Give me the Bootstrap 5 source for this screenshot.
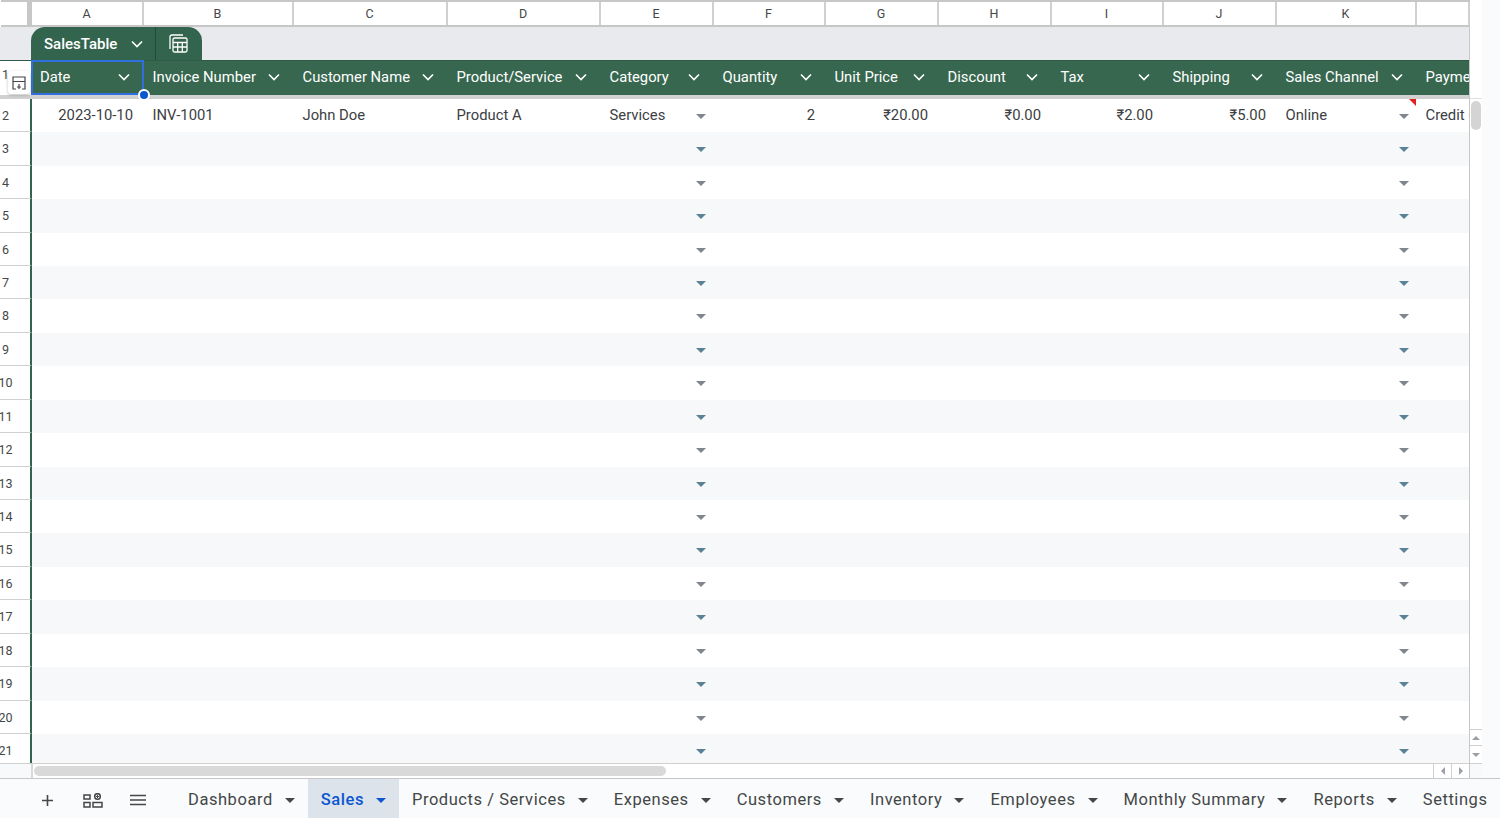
<!DOCTYPE html>
<html lang="en">
<head>
    <meta charset="UTF-8">
    <title>Sales</title>
    <link href="https://cdn.jsdelivr.net/npm/bootstrap@5.3.3/dist/css/bootstrap.min.css" rel="stylesheet">
    <style>
        body {
            background-color: #f9fbfd;
            font-family: Roboto, "Liberation Sans", sans-serif;
            color: #3c4043;
            height: 818px;
            overflow: hidden;
        }
        .sheet-wrap { height: 779px; border-bottom: 1px solid #c7c7c7; }
        .sheet-main { width: 1470px; border-right: 1px solid #c7c7c7; background: #fff; position: relative; }
        .grid-row {
            display: grid;
            grid-template-columns: 31px 112px 150px 154px 153px 113px 112px 113px 113px 112px 113px 140px 53px;
        }
        .col-heads { height: 27px; border-top: 2px solid #c7c7c7; border-bottom: 2px solid #c7c7c7; margin-left: 1px; }
        .col-heads > div {
            font-size: 12.5px;
            line-height: 23px;
            text-align: center;
            padding-right: 1px;
            border-right: 2px solid #d0d0d0;
            color: #444746;
        }
        .col-heads > div:first-child { border-right: 5px solid #c7c7c7; }
        .tab-strip { height: 33px; background: #e8eaed; padding-left: 31px; }
        .table-tab {
            width: 171px;
            height: 33px;
            background: #33644e;
            color: #fff;
            border-radius: 14px 14px 0 0;
            font-size: 15px;
            font-weight: 500;
        }
        .table-name { width: 125px; padding: 1px 0 0 13px; border-right: 1px solid #244a39; }
        .table-name span { width: 87px; }
        .table-icon { width: 45px; }
        .head-row { height: 35px; background: #38674f; color: #fff; border-top: 1px solid #2f5a45; font-size: 14.8px; }
        .head-row > div { padding: 0 13px 2px 9.500px; white-space: nowrap; overflow: hidden; }
        .head-row > div.corner { background: #fff; padding: 0 0 6px 2px; font-size: 12.5px; color: #444746; }
        .head-row > div.date-head { padding-left: 9px; }
        .freeze-bar { height: 4px; background: #d1d1d1; }
        .data-row { height: 33.45px; font-size: 14.8px; line-height: 33px; }
        .data-row:nth-child(even) { background: #f6f8f9; }
        .data-row > div { padding: 0 10px 0 9.500px; white-space: nowrap; position: relative; }
        .data-row > .row-num {
            padding: 0;
            margin-right: -1px;
            z-index: 1;
            background: #fff;
            border-right: 2px solid #33644e;
            border-bottom: 1px solid #d0d0d0;
            font-size: 12.5px;
            color: #444746;
            overflow: hidden;
        }
        .row-num span { display: block; width: 16px; margin-left: -2.500px; text-align: center; }
        .num-cell { text-align: right; }
        .drop-arrow {
            position: absolute;
            right: 7px;
            top: 15px;
            border-left: 5px solid transparent;
            border-right: 5px solid transparent;
            border-top: 5px solid #80868b;
        }
        .data-row:nth-child(even) .drop-arrow { border-top-color: #5b8197; }
        .note-mark {
            position: absolute;
            right: 0;
            top: 0;
            border-left: 7px solid transparent;
            border-top: 7px solid #e3201b;
        }
        .overflow-cell { padding-right: 0 !important; overflow: hidden; }
        .sel-box {
            position: absolute;
            left: 31px;
            top: 60px;
            width: 113px;
            height: 35px;
            border: 2px solid #2f6fdf;
        }
        .sel-handle {
            position: absolute;
            left: 138px;
            top: 89px;
            width: 12px;
            height: 12px;
            border-radius: 50%;
            background: #0b57d0;
            border: 2px solid #fff;
        }
        .freeze-widget {
            position: absolute;
            left: 8px;
            top: 71px;
            width: 22px;
            height: 23px;
            background: #fff;
            border-radius: 3px;
            box-shadow: 0 1px 3px rgba(0,0,0,.25);
            z-index: 2;
        }
        .hbar { height: 15px; border-top: 1px solid #d0d0d0; }
        .hbar-left { width: 33px; border-right: 2px solid #d9d9d9; background: #f8f9fa; }
        .hbar-track { width: 1400px; padding: 2px 0 0 1px; }
        .hbar-thumb { width: 632px; height: 10px; background: #d9d9d9; border-radius: 5px; }
        .hbar-btn { width: 18px; border-left: 1px solid #d0d0d0; }
        .vbar { width: 12px; background: #fff; }
        .vbar-top { height: 99px; background: #fff; border-bottom: 1px solid #e0e0e0; }
        .vbar-thumb { width: 10px; height: 29px; margin: 2px 0 0 1px; background: #d4d4d4; border-radius: 5px; }
        .vbar-btn { height: 17px; }
        .vbar-btn.up { border-top: 1px solid #d0d0d0; border-bottom: 1px solid #d0d0d0; }
        .vbar-corner { height: 15px; background: #f8f9fa; border-top: 1px solid #d0d0d0; }
        .tri-up { border-left: 4px solid transparent; border-right: 4px solid transparent; border-bottom: 4px solid #9aa0a6; }
        .tri-down { border-left: 4px solid transparent; border-right: 4px solid transparent; border-top: 4px solid #9aa0a6; }
        .tri-left { border-top: 4px solid transparent; border-bottom: 4px solid transparent; border-right: 4px solid #9aa0a6; }
        .tri-right { border-top: 4px solid transparent; border-bottom: 4px solid transparent; border-left: 4px solid #9aa0a6; }
        .tab-bar { height: 39px; }
        .tool-btn { width: 45px; padding-top: 3px; }
        .tool-group { width: 175px; padding-left: 25px; }
        .sheet-tab {
            height: 39px;
            padding: 4px 13px 0;
            gap: 12px;
            font-size: 16.5px;
            letter-spacing: .55px;
            color: #444746;
            white-space: nowrap;
        }
        .sheet-tab i { border-left: 5px solid transparent; border-right: 5px solid transparent; border-top: 5px solid #444746; }
        .sheet-tab.on { background: #dde3ea; color: #0b57d0; font-weight: 500; }
        .sheet-tab.on i { border-top-color: #0b57d0; }
    </style>
</head>
<body>
    <div class="sheet-wrap d-flex">
        <div class="sheet-main d-flex flex-column">
            <div class="grid-row col-heads">
                <div></div><div>A</div><div>B</div><div>C</div><div>D</div><div>E</div><div>F</div><div>G</div><div>H</div><div>I</div><div>J</div><div>K</div><div></div>
            </div>
            <div class="tab-strip">
                <div class="table-tab d-flex">
                    <div class="table-name d-flex align-items-center">
                        <span>SalesTable</span>
                        <svg width="12" height="8" viewBox="0 0 12 8" fill="none" stroke="#fff" stroke-width="1.6"><path d="M1 1.5l5 5 5-5"/></svg>
                    </div>
                    <div class="table-icon d-flex align-items-center justify-content-center">
                        <svg width="19" height="19" viewBox="0 0 19 19" fill="none" stroke="#fff" stroke-width="1.3"><path d="M1 15V3a2 2 0 0 1 2-2h11"/><rect x="4" y="4" width="14" height="14" rx="1.5"/><path d="M4 8.500h14M4 13h14M8.700 8.500V18M13.300 8.500V18"/></svg>
                    </div>
                </div>
            </div>
            <div class="grid-row head-row" id="headRow"></div>
            <div class="freeze-bar"></div>
            <div id="rows" class="flex-grow-1 overflow-hidden"></div>
            <div class="hbar d-flex">
                <div class="hbar-left"></div>
                <div class="hbar-track"><div class="hbar-thumb"></div></div>
                <div class="hbar-btn d-flex align-items-center justify-content-center"><span class="tri-left"></span></div>
                <div class="hbar-btn d-flex align-items-center justify-content-center"><span class="tri-right"></span></div>
            </div>
            <div class="sel-box"></div>
            <div class="sel-handle"></div>
            <div class="freeze-widget d-flex align-items-center justify-content-center">
                <svg width="14" height="14" viewBox="0 0 14 14" fill="none" stroke="#444746" stroke-width="1.2"><path d="M4 13H1V1h12v12h-3M1 5.500h12M7 8v5M5 11h4"/></svg>
            </div>
        </div>
        <div class="vbar d-flex flex-column">
            <div class="vbar-top"></div>
            <div class="flex-grow-1"><div class="vbar-thumb"></div></div>
            <div class="vbar-btn up d-flex align-items-center justify-content-center"><span class="tri-up"></span></div>
            <div class="vbar-btn d-flex align-items-center justify-content-center"><span class="tri-down"></span></div>
            <div class="vbar-corner"></div>
        </div>
    </div>

    <div class="tab-bar d-flex align-items-center">
        <div class="tool-group d-flex align-items-center flex-shrink-0">
            <div class="tool-btn d-flex justify-content-center">
                <svg width="13" height="13" viewBox="0 0 13 13" stroke="#444746" stroke-width="1.6"><path d="M6.500 1v11M1 6.500h11"/></svg>
            </div>
            <div class="tool-btn d-flex justify-content-center">
                <svg width="20" height="15" viewBox="0 0 20 15" fill="none" stroke="#444746" stroke-width="1.5"><rect x="1" y="2" width="6" height="4"/><rect x="1" y="9.500" width="6" height="4.500"/><rect x="10" y="9.500" width="9" height="4.500"/><circle cx="14.500" cy="3.500" r="2.800"/><path d="M14.500 2v3M13 3.500h3" stroke-width="1"/></svg>
            </div>
            <div class="tool-btn d-flex justify-content-center">
                <svg width="16" height="12" viewBox="0 0 16 12" stroke="#444746" stroke-width="1.5"><path d="M0 1.500h16M0 6h16M0 10.500h16"/></svg>
            </div>
        </div>
        <div class="sheet-tab d-flex align-items-center">Dashboard <i></i></div>
        <div class="sheet-tab on d-flex align-items-center">Sales <i></i></div>
        <div class="sheet-tab d-flex align-items-center">Products / Services <i></i></div>
        <div class="sheet-tab d-flex align-items-center">Expenses <i></i></div>
        <div class="sheet-tab d-flex align-items-center">Customers <i></i></div>
        <div class="sheet-tab d-flex align-items-center">Inventory <i></i></div>
        <div class="sheet-tab d-flex align-items-center">Employees <i></i></div>
        <div class="sheet-tab d-flex align-items-center">Monthly Summary <i></i></div>
        <div class="sheet-tab d-flex align-items-center">Reports <i></i></div>
        <div class="sheet-tab d-flex align-items-center">Settings</div>
    </div>

    <script src="https://cdn.jsdelivr.net/npm/bootstrap@5.3.3/dist/js/bootstrap.bundle.min.js"></script>
    <script>
        const heads = ['Date', 'Invoice Number', 'Customer Name', 'Product/Service', 'Category', 'Quantity', 'Unit Price', 'Discount', 'Tax', 'Shipping', 'Sales Channel'];
        const chevron = '<svg width="12" height="8" viewBox="0 0 12 8" fill="none" stroke="#fff" stroke-width="1.6"><path d="M1 1.500l5 5 5-5"/></svg>';
        let headHtml = '<div class="corner d-flex align-items-center">1</div>';
        heads.forEach((h, i) => {
            headHtml += `<div class="d-flex align-items-center justify-content-between${i === 0 ? ' date-head' : ''}"><span>${h}</span>${chevron}</div>`;
        });
        headHtml += '<div class="d-flex align-items-center">Payment Method</div>';
        document.getElementById('headRow').innerHTML = headHtml;

        const arrow = '<span class="drop-arrow"></span>';
        let rowsHtml = `<div class="grid-row data-row">
            <div class="row-num"><span>2</span></div>
            <div class="num-cell">2023-10-10</div><div>INV-1001</div><div>John Doe</div><div>Product A</div>
            <div>Services${arrow}</div><div class="num-cell">2</div><div class="num-cell">₹20.00</div><div class="num-cell">₹0.00</div>
            <div class="num-cell">₹2.00</div><div class="num-cell">₹5.00</div><div>Online${arrow}<span class="note-mark"></span></div>
            <div class="overflow-cell">Credit Card</div>
        </div>`;
        for (let n = 3; n <= 21; n++) {
            rowsHtml += `<div class="grid-row data-row">
                <div class="row-num"><span>${n}</span></div>
                <div></div><div></div><div></div><div></div><div>${arrow}</div><div></div><div></div><div></div><div></div><div></div><div>${arrow}</div><div></div>
            </div>`;
        }
        document.getElementById('rows').innerHTML = rowsHtml;
    </script>
</body>
</html>
